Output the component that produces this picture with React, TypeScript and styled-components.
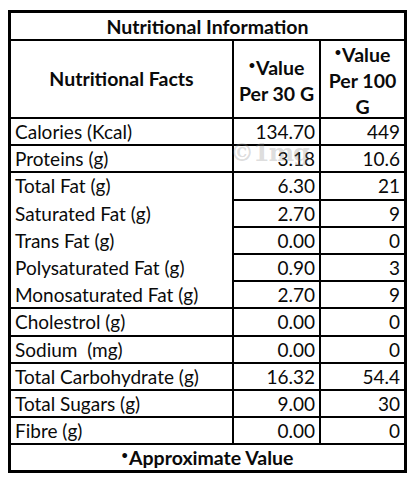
import React from "react";
import styled, { createGlobalStyle } from "styled-components";

const GlobalStyle = createGlobalStyle`
  body {
    margin: 0;
    background: #fff;
  }
`;

type Row = { label: string; per30: string; per100: string };

const topRows: Row[] = [
  { label: "Calories (Kcal)", per30: "134.70", per100: "449" },
  { label: "Proteins (g)", per30: "3.18", per100: "10.6" },
];

const fatRows: Row[] = [
  { label: "Total Fat (g)", per30: "6.30", per100: "21" },
  { label: "Saturated Fat (g)", per30: "2.70", per100: "9" },
  { label: "Trans Fat (g)", per30: "0.00", per100: "0" },
  { label: "Polysaturated Fat (g)", per30: "0.90", per100: "3" },
  { label: "Monosaturated Fat (g)", per30: "2.70", per100: "9" },
];

const bottomRows: Row[] = [
  { label: "Cholestrol (g)", per30: "0.00", per100: "0" },
  { label: "Sodium\u00a0 (mg)", per30: "0.00", per100: "0" },
  { label: "Total Carbohydrate (g)", per30: "16.32", per100: "54.4" },
  { label: "Total Sugars (g)", per30: "9.00", per100: "30" },
  { label: "Fibre (g)", per30: "0.00", per100: "0" },
];

const Page = styled.div`
  padding: 10px 0 0 8px;
`;

const Table = styled.div`
  position: relative;
  display: grid;
  grid-template-columns: 221px 85px 83px;
  grid-template-rows: 26px 76px repeat(13, 25.2px);
  gap: 2px;
  width: max-content;
  padding: 3px;
  background: #000;
  font-family: Lato, "Open Sans", sans-serif;
  font-size: 19px;
  color: #0a0a0a;
`;

const Cell = styled.div`
  background: #fff;
  display: flex;
  align-items: center;
`;

const Title = styled(Cell)`
  grid-column: 1 / span 3;
  justify-content: center;
  font-weight: 700;
  font-size: 19.5px;
`;

const HeadCell = styled(Cell)`
  justify-content: center;
  text-align: center;
  font-weight: 700;
  font-size: 19.5px;
  line-height: 26px;
`;

const Label = styled(Cell)`
  padding-left: 4px;
  white-space: nowrap;
`;

const Value = styled(Cell)`
  justify-content: flex-end;
  padding-right: 4px;
`;

const FatBlock = styled.div`
  grid-row: span 5;
  display: grid;
  grid-template-rows: repeat(5, 1fr);
  row-gap: 2px;
  background: #fff;
`;

const Footer = styled(Title)``;

const Dot = styled.span`
  font-size: 11px;
  vertical-align: 6px;
  margin-right: 1px;
`;

const Watermark = styled.span`
  position: absolute;
  left: 222px;
  top: 128px;
  font-family: "DejaVu Serif", serif;
  font-weight: 700;
  font-size: 24px;
  letter-spacing: -1px;
  color: rgba(140, 140, 140, 0.3);
  pointer-events: none;
`;

const renderRow = (r: Row) => (
  <React.Fragment key={r.label}>
    <Label>{r.label}</Label>
    <Value>{r.per30}</Value>
    <Value>{r.per100}</Value>
  </React.Fragment>
);

export default function App() {
  return (
    <Page>
      <GlobalStyle />
      <Table>
        <Title>Nutritional Information</Title>
        <HeadCell>Nutritional Facts</HeadCell>
        <HeadCell>
          <div>
            <Dot>•</Dot>Value
            <br />
            Per 30 G
          </div>
        </HeadCell>
        <HeadCell>
          <div>
            <Dot>•</Dot>Value
            <br />
            Per 100
            <br />G
          </div>
        </HeadCell>
        {topRows.map(renderRow)}
        <FatBlock>
          {fatRows.map((r) => (
            <Label key={r.label}>{r.label}</Label>
          ))}
        </FatBlock>
        {fatRows.map((r) => (
          <React.Fragment key={r.label}>
            <Value>{r.per30}</Value>
            <Value>{r.per100}</Value>
          </React.Fragment>
        ))}
        {bottomRows.map(renderRow)}
        <Footer>
          <span>
            <Dot>•</Dot>Approximate Value
          </span>
        </Footer>
        <Watermark>©1mg</Watermark>
      </Table>
    </Page>
  );
}
